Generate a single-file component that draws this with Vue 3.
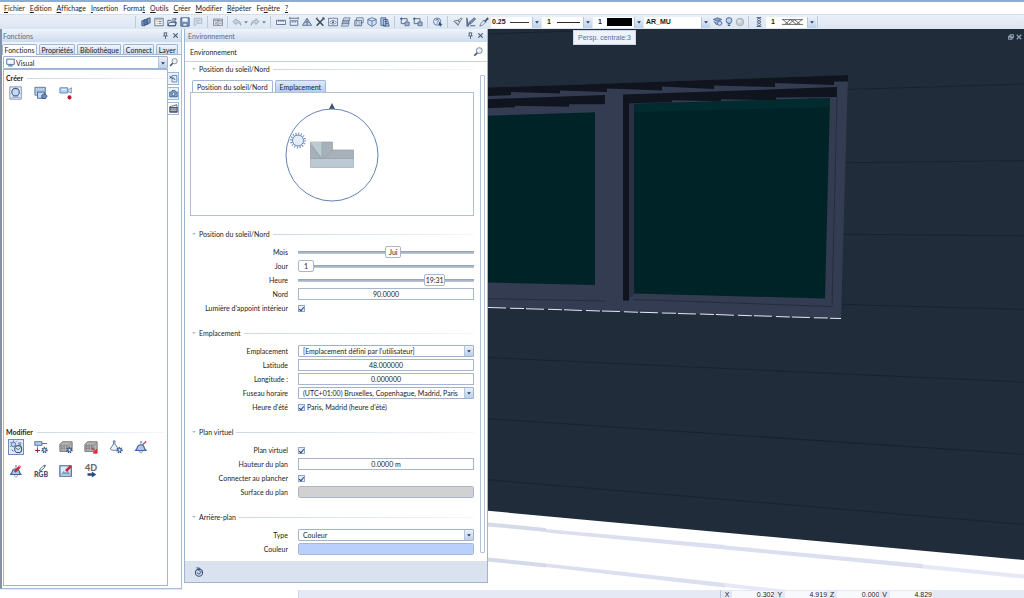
<template>
  <div class="app">
    <svg class="sprite" aria-hidden="true">
      <symbol id="i-layers" viewBox="0 0 12 12"><path d="M1 4.5h4v6H1zM3.5 3h4v6h-4zM7 2l4-1v6l-4 2z" fill="#7f9fc9" stroke="#2f4a78" stroke-width=".9" /></symbol>
      <symbol id="i-list" viewBox="0 0 12 12"><path d="M1 1.5h10v9H1z" fill="#fdfdf6" stroke="#56657d" /><path d="M1.5 2h9v2h-9z" fill="#a9bcd8" /><path d="M3 5.5h1.5M3 8h1.5" stroke="#d1a336" /><path d="M5.5 5.5H9M5.5 8H9" stroke="#56657d" /></symbol>
      <symbol id="i-open" viewBox="0 0 12 12"><path d="M1 10.5V4h3l1 1h5v5.5zM1 10.500l2-4h8.500l-1.500 4z" fill="#e6edf7" stroke="#3b5479" /><path d="M6 3.500c.5-2 3-2.500 4-.5M10.500 1v2.500H8" fill="none" stroke="#3b5479" /></symbol>
      <symbol id="i-save" viewBox="0 0 12 12"><path d="M1 1h10v10H1z" fill="#7f9cc6" stroke="#344e7a" /><path d="M3 1.500h6v4H3z" fill="#f4f7fb" /><path d="M3.500 7.500h5V11h-5z" fill="#dbe5f1" stroke="#344e7a" stroke-width=".7" /></symbol>
      <symbol id="i-sheet" viewBox="0 0 12 12"><path d="M1.500 1.500h9v6h-5l-4 3z" fill="#dfe5ee" stroke="#a3afc0" /><path d="M3 4h6M3 6h4" stroke="#a3afc0" /></symbol>
      <symbol id="i-table" viewBox="0 0 12 12"><path d="M.5 2.500h11v7.500H.5z" fill="#eef1f5" stroke="#6d7c92" /><path d="M1 4.500h10M6 3v7" stroke="#6d7c92" /><path d="M2 6h3v3H2z" fill="#c9ae91" /><path d="M7 6h4M7 8h4" stroke="#9aa9bf" /></symbol>
      <symbol id="i-undo" viewBox="0 0 12 12"><path d="M5 2L1 5.500 5 9V7c3-.5 5 .5 5.500 3C11 6 9 4 5 4z" fill="#c9d3e1" stroke="#8b9ab0" stroke-width=".8" /></symbol>
      <symbol id="i-redo" viewBox="0 0 12 12"><path d="M7 2l4 3.500L7 9V7C4 6.500 2 7.500 1.500 10 1 6 3 4 7 4z" fill="#c9d3e1" stroke="#8b9ab0" stroke-width=".8" /></symbol>
      <symbol id="i-ruler" viewBox="0 0 12 12"><path d="M.5 4h11v5H.5z" fill="#e9f0f9" stroke="#4d6488" /><path d="M3 4v2M5 4v2M7 4v2M9 4v2" stroke="#4d6488" stroke-width=".8" /></symbol>
      <symbol id="i-measure" viewBox="0 0 12 12"><path d="M1 1.500h10M1 0v3M11 0v3" stroke="#4d6488" /><path d="M1.500 4.500h9V10h-9z" fill="#e9f0f9" stroke="#4d6488" /><path d="M4 5v2M6 5v2M8 5v2" stroke="#4d6488" stroke-width=".8" /></symbol>
      <symbol id="i-angle" viewBox="0 0 12 12"><path d="M6 1.500L11.500 10H.5zM3 7c2-1.500 4-1.500 6 0M6 2v8" fill="#c3d3e8" stroke="#3f587f" stroke-width=".9" /></symbol>
      <symbol id="i-tools" viewBox="0 0 12 12"><path d="M1.500 1.500l8.500 9M10.500 1.500L2 10.500" stroke="#3a4a63" stroke-width="1.800" /><path d="M1 2.500l2-2M8.500 1h2.500v2.500" fill="none" stroke="#3a4a63" /></symbol>
      <symbol id="i-view" viewBox="0 0 12 12"><path d="M.5 1.500h11v9H.5z" fill="#e3ebf6" stroke="#5a7093" /><path d="M2 6.500c2-3 6-3 8 0-2 2.500-6 2.500-8 0z" fill="#fff" stroke="#3f587f" stroke-width=".8" /><circle cx="6" cy="6.300" r="1.300" fill="#3f587f" /></symbol>
      <symbol id="i-stack" viewBox="0 0 12 12"><path d="M3.500 1H11L9.500 5H2zM2.500 4H10L8.500 8H1zM2 7h8l-1.500 4H.5z" fill="#d6e1f0" stroke="#4d6488" stroke-width=".8" /></symbol>
      <symbol id="i-windows" viewBox="0 0 12 12"><path d="M3 1h8v6H3z" fill="#edf2f9" stroke="#5a7093" /><path d="M1 4h8v6.500H1z" fill="#cfdcec" stroke="#4d6488" /><path d="M3 6h4v2.500H3z" fill="#fff" stroke="#4d6488" stroke-width=".6" /></symbol>
      <symbol id="i-cube" viewBox="0 0 12 12"><path d="M6 .8l5 2v5.500l-5 3-5-3V2.800z" fill="#d4e2f4" stroke="#3f5f92" stroke-width=".9" /><path d="M1 3l5 2 5-2M6 5v6" fill="none" stroke="#3f5f92" stroke-width=".9" /></symbol>
      <symbol id="i-doc" viewBox="0 0 12 12"><path d="M1 1h6v9H1zM4 3h5l2 8H4z" fill="#b9cbe3" stroke="#34507f" stroke-width=".9" /><path d="M5.500 5.500h3M6 8h3.500" stroke="#34507f" /></symbol>
      <symbol id="i-select" viewBox="0 0 12 12"><path d="M1.500 2h7v6h-7z" fill="#e0e9f5" stroke="#3f587f" /><path d="M6 6h5v4.500H6z" fill="#9eb5d4" stroke="#3f587f" stroke-width=".8" /><path d="M0 2h3M1.500.5v3" stroke="#3f587f" /></symbol>
      <symbol id="i-help" viewBox="0 0 12 12"><circle cx="5" cy="5.500" r="4.300" fill="#e6eef8" stroke="#4d6c9b" /><path d="M3.500 4.300c0-2 3-2 3 0 0 1-1.500 1-1.500 2.200M5 7.600v.8" fill="none" stroke="#34507f" /><path d="M7 5l4.500 4.500-2 .2.800 1.800H9l-.7-1.700L7 11z" fill="#34507f" /></symbol>
      <symbol id="i-brush" viewBox="0 0 12 12"><path d="M1 5l5 5 2-4-3-2zM6 4l4-3 1 1-3 4z" fill="#dfe6ef" stroke="#4b5a71" stroke-width=".9" /><path d="M3 6l3 3" stroke="#4b5a71" /></symbol>
      <symbol id="i-pencil" viewBox="0 0 12 12"><path d="M1 1v10h2zM3 9l1-3 6-5 1.500 1.500L6 8z" fill="#7f97bd" stroke="#34496d" stroke-width=".8" /><path d="M5 10.500h6" stroke="#34496d" /></symbol>
      <symbol id="i-pipette" viewBox="0 0 12 12"><path d="M1 11l1-3 4-4 2 2-4 4z" fill="#e6edf7" stroke="#4b5a71" stroke-width=".8" /><path d="M5.500 3.500l3 3M7 5l3-4 1.300 1.200L8 5.500z" fill="#3f4f69" stroke="#3f4f69" /></symbol>
      <symbol id="i-planes" viewBox="0 0 12 12"><path d="M.5 3l5-2 5 2-5 2zM1 5l3 4 7-2" fill="#8fa9ce" stroke="#3f5f92" /><circle cx="8" cy="7.500" r="2.500" fill="#cbdaee" stroke="#3f5f92" /></symbol>
      <symbol id="i-bulb" viewBox="0 0 12 12"><circle cx="6" cy="4.200" r="3.500" fill="#bcd0ec" stroke="#3f5f92" /><path d="M4.500 8h3M4.500 10h3" stroke="#3f5f92" stroke-width="1.300" /></symbol>
      <symbol id="i-disc" viewBox="0 0 12 12"><circle cx="6" cy="6" r="4.500" fill="#c9cdd3" stroke="#a2a8b1" /><circle cx="5" cy="5" r="1.800" fill="#e5e7ea" /></symbol>
      <symbol id="i-hatch" viewBox="0 0 12 12"><path d="M3.500 0l5 3-5 3 5 3-5 3M8.500 0l-5 3 5 3-5 3 5 3M3 .500h6M3 11.500h6" fill="none" stroke="#3f587f" stroke-width=".9" /></symbol>
      <symbol id="i-search" viewBox="0 0 12 12"><circle cx="7.500" cy="4.300" r="3.500" fill="#eef3f9" stroke="#62728b" /><path d="M5 7l-3.500 3.500" stroke="#46546b" stroke-width="2" /></symbol>
      <symbol id="i-pin" viewBox="0 0 8 8"><path d="M2 1h4M2.500 1v3.500M5 1v3.500M1.500 4.500h5M4 4.500V8" fill="none" stroke="#4b5a70" /></symbol>
      <symbol id="i-close" viewBox="0 0 8 8"><path d="M1.500 1.500l5 5M6.500 1.500l-5 5" stroke="#4b5a70" stroke-width="1.300" /></symbol>
      <symbol id="i-caret" viewBox="0 0 8 8"><path d="M1.500 3h5L4 6z" fill="#26344d" /></symbol>
      <symbol id="i-monitor" viewBox="0 0 12 12"><path d="M1 1.500h10v7H1z" fill="#f7fbff" stroke="#41659a" stroke-width="1.200" /><path d="M3 10.500h6" stroke="#41659a" stroke-width="1.500" /></symbol>
      <symbol id="i-wrench-page" viewBox="0 0 12 12"><path d="M4 2h6.500v8.500H4z" fill="#e8f0fa" stroke="#4d6c9b" /><path d="M1 3l3 3 2-1 2 3M1 6l2-3" fill="none" stroke="#34507f" stroke-width="1.300" /></symbol>
      <symbol id="i-camera" viewBox="0 0 12 12"><path d="M1 4h2l1-2h4l1 2h2v6.500H1z" fill="#8ba7cf" stroke="#34507f" /><circle cx="6" cy="6.800" r="2" fill="#eaf1fa" stroke="#34507f" /></symbol>
      <symbol id="i-clap" viewBox="0 0 12 12"><path d="M1 4h10v7H1z" fill="#656d7a" stroke="#2f3540" /><path d="M1 3.500L10.500 1v2.500" fill="#fff" stroke="#2f3540" /><path d="M3 3l1 1M6 2l1 1.500M2 6.500h8M2 8.500h8" stroke="#d9dde3" /></symbol>
      <symbol id="i-render" viewBox="0 0 16 16"><path d="M1 1h13v14H1z" fill="#f2f5f9" stroke="#75839a" /><circle cx="7.500" cy="7" r="4.300" fill="#c4daf2" stroke="#3f5f8f" stroke-width="1.300" /><path d="M2 13.500c1.500-1.500 3-2 5.500-2s4 .5 6 2z" fill="#8da5c6" /></symbol>
      <symbol id="i-film" viewBox="0 0 16 16"><path d="M1 1.500h12v9H1z" fill="#a9c2e2" stroke="#53739f" /><path d="M2 3.500h10M2 9h10" stroke="#e9f0f9" stroke-dasharray="1.500 1.200" /><path d="M4 7h8v7H4z" fill="#c5d8ee" stroke="#41608c" /><path d="M9 10.500c2-2 5-1 6 1l-2 3-4-.5z" fill="#6f8fbc" stroke="#34507f" /></symbol>
      <symbol id="i-movie" viewBox="0 0 16 16"><path d="M1 2h9v6H1z" fill="#b8d2ef" stroke="#5c82b5" /><path d="M10 5l4-3v6l-4-2z" fill="#e8f1fb" stroke="#5c82b5" /><path d="M3 4h5" stroke="#fff" /><circle cx="12" cy="13" r="2.300" fill="#c41230" /></symbol>
      <symbol id="i-env" viewBox="0 0 16 16"><circle cx="5" cy="5" r="2.600" fill="#bfd5ef" stroke="#41659a" /><path d="M1 2l1 1M1 8l1-1M5 .500V2M9 1L8 2" stroke="#41659a" /><circle cx="10.500" cy="10.500" r="4" fill="#d9e4f1" stroke="#3f5a82" stroke-width="1.300" /><path d="M8 9.500l2.500 1.500L13 9M10 3.500h4M11 5.500h3M3 11l2 2" fill="none" stroke="#3f5a82" /></symbol>
      <symbol id="i-gear" viewBox="0 0 10 10"><circle cx="5" cy="5" r="3.300" fill="none" stroke="#33578d" stroke-width="2.600" stroke-dasharray="1.500 1.090" /><circle cx="5" cy="5" r="2.300" fill="#dbe7f5" stroke="#33578d" stroke-width="1.400" /></symbol>
      <symbol id="i-cam-gear" viewBox="0 0 16 16"><path d="M1 2h8v4H1zM9 4h6" fill="#b8d2ef" stroke="#4d77b0" stroke-width="1.200" /><path d="M4 6.500V9" stroke="#4d77b0" /><path d="M1 12h6M4 9.500v5" stroke="#a52430" stroke-width="1.300" /><use href="#i-gear" x="8" y="7.500" width="8" height="8" /></symbol>
      <symbol id="i-block-gear" viewBox="0 0 16 16"><path d="M1 5l3-3h11v8l-3 3H1z" fill="#b4b4b4" stroke="#6b6b6b" /><path d="M2 6h9.500L14 3.500M2 8h10M2 10h10" fill="none" stroke="#6f6f6f" stroke-dasharray="2 1" /><use href="#i-gear" x="8" y="7.500" width="8" height="8" /></symbol>
      <symbol id="i-block-arrow" viewBox="0 0 16 16"><path d="M1 5l3-3h11v8l-3 3H1z" fill="#b4b4b4" stroke="#6b6b6b" /><path d="M2 6h9.500L14 3.500M2 8h10M2 10h10" fill="none" stroke="#5f5f5f" stroke-dasharray="2 1" /><path d="M9 9l3 3" stroke="#d32b3a" stroke-width="1.600" /><path d="M15 10.500V15h-4.500z" fill="#d32b3a" stroke="#d32b3a" /></symbol>
      <symbol id="i-light-gear" viewBox="0 0 16 16"><path d="M5 1h2l-.3 3.500L10.500 10c-2 2.500-7 2.500-9 0l3.700-5.500z" fill="#edf3fa" stroke="#51698e" /><use href="#i-gear" x="8" y="7.500" width="8" height="8" /></symbol>
      <symbol id="i-lamp" viewBox="0 0 16 16"><path d="M8 1v3M1 12c2 0 2.500-2 3-4 .7-3.500 6.500-3.500 7.500 0 .5 2 1 4 3 4z" fill="#a9c9ee" stroke="#40659c" stroke-width="1.200" /><path d="M6 12.500c.5 3 3.500 3 4 0" fill="#f5d9a0" stroke="#8a94a5" /><path d="M9 6l5-4.500" stroke="#bf5a67" stroke-width="1.800" /></symbol>
      <symbol id="i-lamp-edit" viewBox="0 0 16 16"><path d="M8 1v3M1 12c2 0 2.500-2 3-4 .7-3.500 6.500-3.500 7.500 0 .5 2 1 4 3 4z" fill="#a9c9ee" stroke="#40659c" stroke-width="1.200" /><path d="M6 12.500c.5 3 3.500 3 4 0" fill="#fff" stroke="#8a94a5" /><path d="M6.500 9l6.500-6.500" stroke="#c7283a" stroke-width="3" /><path d="M11 2l3 3" stroke="#f3c7cc" /></symbol>
      <symbol id="i-dropper" viewBox="0 0 16 8"><path d="M6 8l1-2.500L11 2l1.500 1.500L9 7z" fill="#edf2f8" stroke="#5e6b7e" /><path d="M10.500 2l2-1.500 1.500 1.500-1.500 1.500z" fill="#6b7788" /></symbol>
      <symbol id="i-texture" viewBox="0 0 16 16"><path d="M1 2h13v12H1z" fill="#dcebfa" stroke="#3f5f92" stroke-width="1.300" /><path d="M2 12l3-4 3 2 2-3 3 5z" fill="#7f9fc9" /><path d="M8 8l5.500-5.500" stroke="#c7283a" stroke-width="3" /></symbol>
      <symbol id="i-arrow" viewBox="0 0 16 8"><path d="M4 2.500h5V.5l5 3.500-5 3.500v-2H4z" fill="#2b4a86" /></symbol>
      <symbol id="i-refresh" viewBox="0 0 12 12"><circle cx="6" cy="6.800" r="4.300" fill="#cfdded" stroke="#3a5378" stroke-width="1.300" /><path d="M3 1l4 .5-2 3M3.500 7l2.500 1.500L9 6M6 4.500l2 1" fill="none" stroke="#3a5378" stroke-width="1.200" /></symbol>
    </svg>

    <div class="frame-top"></div>

    <nav class="menu">
      <button v-for="m in menus" :key="m.join('')">{{ m[0] }}<u>{{ m[1] }}</u>{{ m[2] }}</button>
    </nav>

    <div class="toolbar">
      <div class="tool-group">
        <button v-for="t in fileTools" :key="t" class="tool" :aria-label="t"><svg><use :href="'#i-' + t" /></svg></button>
      </div>
      <div class="tool-group">
        <button class="tool" aria-label="Tableau"><svg><use href="#i-table" /></svg></button>
      </div>
      <div class="tool-group undo">
        <button class="tool" aria-label="Annuler"><svg><use href="#i-undo" /></svg></button>
        <svg class="mini"><use href="#i-caret" /></svg>
        <button class="tool" aria-label="Rétablir"><svg><use href="#i-redo" /></svg></button>
        <svg class="mini"><use href="#i-caret" /></svg>
      </div>
      <div class="tool-group">
        <button v-for="t in viewTools" :key="t" class="tool" :aria-label="t"><svg><use :href="'#i-' + t" /></svg></button>
      </div>
      <div class="tool-group">
        <button class="tool" aria-label="Sélection"><svg><use href="#i-select" /></svg></button>
        <button class="tool" aria-label="Sélection liée"><svg><use href="#i-select" /></svg></button>
      </div>
      <div class="tool-group">
        <button class="tool" aria-label="Aide"><svg><use href="#i-help" /></svg></button>
      </div>
      <div class="tool-group formats">
        <button v-for="t in drawTools" :key="t" class="tool" :aria-label="t"><svg><use :href="'#i-' + t" /></svg></button>
        <div class="pick">
          <select aria-label="Épaisseur"><option>0.25</option></select>
          <svg class="line" viewBox="0 0 24 8" preserveAspectRatio="none"><path d="M0 4.500h24" stroke="#222" /></svg>
          <span class="arrow"><svg><use href="#i-caret" /></svg></span>
        </div>
        <div class="pick short">
          <select aria-label="Type de trait"><option>1</option></select>
          <svg class="line" viewBox="0 0 24 8" preserveAspectRatio="none"><path d="M0 4.500h24" stroke="#222" /></svg>
          <span class="arrow"><svg><use href="#i-caret" /></svg></span>
        </div>
        <div class="pick short">
          <select aria-label="Couleur du trait"><option>1</option></select>
          <span class="ink"></span>
          <span class="arrow"><svg><use href="#i-caret" /></svg></span>
        </div>
        <div class="pick layer">
          <select aria-label="Calque"><option>AR_MU</option></select>
          <span class="arrow"><svg><use href="#i-caret" /></svg></span>
        </div>
        <button v-for="t in layerTools" :key="t" class="tool" :aria-label="t"><svg><use :href="'#i-' + t" /></svg></button>
      </div>
      <div class="tool-group hatch">
        <button class="tool" aria-label="Hachure"><svg><use href="#i-hatch" /></svg></button>
        <div class="pick short">
          <select aria-label="Motif"><option>1</option></select>
          <svg class="line" viewBox="0 0 24 8"><path d="M1 1.500h22M1 6.500h22M2 1.500l6 5 6-5 6 5M4 6.500l6-5 6 5 6-5" fill="none" stroke="#444" stroke-width=".8" /></svg>
          <span class="arrow"><svg><use href="#i-caret" /></svg></span>
        </div>
      </div>
    </div>

    <main class="workspace">
      <aside class="panel functions">
        <header class="titlebar">
          <span>Fonctions</span>
          <button aria-label="Épingler"><svg><use href="#i-pin" /></svg></button>
          <button aria-label="Fermer"><svg><use href="#i-close" /></svg></button>
        </header>
        <div class="tabs">
          <button v-for="(t, i) in tabs" :key="t" :class="['tab', { active: i === 0 }]">{{ t }}</button>
        </div>
        <div class="functions-body">
          <div class="functions-main">
            <div class="combo">
              <svg class="lead"><use href="#i-monitor" /></svg>
              <select aria-label="Module"><option>Visual</option></select>
              <span class="arrow"><svg><use href="#i-caret" /></svg></span>
            </div>
            <div class="groups">
              <section class="group create">
                <h2>Créer</h2>
                <div class="icons">
                  <button v-for="n in createIcons" :key="n" :aria-label="n"><svg><use :href="'#i-' + n" /></svg></button>
                </div>
              </section>
              <section class="group modify">
                <h2>Modifier</h2>
                <div class="icons">
                  <button v-for="(n, i) in modifyIcons" :key="n" :class="{ selected: i === 0 }" :aria-label="n"><svg><use :href="'#i-' + n" /></svg></button>
                  <button class="labelled"><svg><use href="#i-dropper" /></svg><b>RGB</b></button>
                  <button aria-label="Texture"><svg><use href="#i-texture" /></svg></button>
                  <button class="labelled four"><b>4D</b><svg><use href="#i-arrow" /></svg></button>
                </div>
              </section>
            </div>
          </div>
          <div class="side-tabs">
            <button class="plain" aria-label="Rechercher"><svg><use href="#i-search" /></svg></button>
            <button aria-label="Outils"><svg><use href="#i-wrench-page" /></svg></button>
            <button aria-label="Vues"><svg><use href="#i-camera" /></svg></button>
            <button class="active" aria-label="Animation"><svg><use href="#i-clap" /></svg></button>
          </div>
        </div>
      </aside>

      <div class="middle">
        <section class="panel environment">
          <header class="titlebar">
            <span>Environnement</span>
            <button aria-label="Épingler"><svg><use href="#i-pin" /></svg></button>
            <button aria-label="Fermer"><svg><use href="#i-close" /></svg></button>
          </header>
          <div class="subhead">
            <span>Environnement</span>
            <button aria-label="Rechercher"><svg><use href="#i-search" /></svg></button>
          </div>
          <div class="env-body">
            <form class="form" @submit.prevent>
              <section class="block sun">
                <h3>Position du soleil/Nord</h3>
                <div class="sun-tabs">
                  <button type="button" class="active">Position du soleil/Nord</button>
                  <button type="button">Emplacement</button>
                </div>
                <div class="compass">
                  <svg viewBox="0 0 100 102">
                    <path d="M47 8l3-6 3 6z" fill="#41506a" />
                    <circle cx="50" cy="54" r="46" fill="#fff" stroke="#6484b4" />
                    <circle cx="16" cy="39.500" r="7" fill="none" stroke="#6583b5" stroke-width="2" stroke-dasharray="1 1.750" />
                    <circle cx="16" cy="39.500" r="5.500" fill="#e3ecf9" stroke="#6583b5" />
                    <path d="M28.500 41h22v8h21v17.500h-43z" fill="#a7b1b9" stroke="#8a949c" stroke-width=".6" />
                    <path d="M28.500 57.500h43v9h-43zM28.500 41h11.500v16.500z" fill="#bccad3" />
                    <path d="M28.500 57.500h43M40 41v16.500M28.500 45L40 57.500M50.500 49l-8 8" stroke="#8f9aa3" stroke-width=".6" />
                  </svg>
                </div>
              </section>

              <section class="block">
                <h3>Position du soleil/Nord</h3>
                <div v-for="s in sliders" :key="s.id" class="row">
                  <label :for="s.id">{{ s.label }}</label>
                  <div class="slider" :style="{ '--w': s.width + 'px', '--at': (s.value - s.min) / (s.max - s.min) }">
                    <input :id="s.id" v-model.number="s.value" type="range" :min="s.min" :max="s.max" />
                    <output :for="s.id">{{ s.format(s.value) }}</output>
                  </div>
                </div>
                <div class="row">
                  <label for="north">Nord</label>
                  <input id="north" type="text" class="field" value="90.0000" />
                </div>
                <div class="row">
                  <label for="fill">Lumière d'appoint intérieur</label>
                  <input id="fill" type="checkbox" checked />
                </div>
              </section>

              <section class="block">
                <h3>Emplacement</h3>
                <div class="row">
                  <label for="place">Emplacement</label>
                  <div class="combo">
                    <select id="place"><option>[Emplacement défini par l'utilisateur]</option></select>
                    <span class="arrow"><svg><use href="#i-caret" /></svg></span>
                  </div>
                </div>
                <div class="row">
                  <label for="lat">Latitude</label>
                  <input id="lat" type="text" class="field" value="48.000000" />
                </div>
                <div class="row">
                  <label for="lon">Longitude :</label>
                  <input id="lon" type="text" class="field" value="0.000000" />
                </div>
                <div class="row">
                  <label for="zone">Fuseau horaire</label>
                  <div class="combo">
                    <select id="zone"><option>(UTC+01:00) Bruxelles, Copenhague, Madrid, Paris</option></select>
                    <span class="arrow"><svg><use href="#i-caret" /></svg></span>
                  </div>
                </div>
                <div class="row">
                  <label for="dst">Heure d'été</label>
                  <div class="check">
                    <input id="dst" type="checkbox" checked />
                    <span>Paris, Madrid (heure d'été)</span>
                  </div>
                </div>
              </section>

              <section class="block">
                <h3>Plan virtuel</h3>
                <div class="row">
                  <label for="plane">Plan virtuel</label>
                  <input id="plane" type="checkbox" checked />
                </div>
                <div class="row">
                  <label for="height">Hauteur du plan</label>
                  <input id="height" type="text" class="field" value="0.0000 m" />
                </div>
                <div class="row">
                  <label for="floor">Connecter au plancher</label>
                  <input id="floor" type="checkbox" checked />
                </div>
                <div class="row">
                  <label for="surface">Surface du plan</label>
                  <input id="surface" type="color" value="#d1d1d1" />
                </div>
              </section>

              <section class="block">
                <h3>Arrière-plan</h3>
                <div class="row">
                  <label for="type">Type</label>
                  <div class="combo">
                    <select id="type"><option>Couleur</option></select>
                    <span class="arrow"><svg><use href="#i-caret" /></svg></span>
                  </div>
                </div>
                <div class="row">
                  <label for="color">Couleur</label>
                  <input id="color" type="color" value="#bbcffd" />
                </div>
              </section>
            </form>
            <div class="scroll"><i></i></div>
          </div>
          <footer class="env-foot">
            <button aria-label="Actualiser"><svg><use href="#i-refresh" /></svg></button>
          </footer>
        </section>
      </div>

      <div class="viewport">
        <div class="tip">Persp. centrale:3</div>
        <div class="view-buttons">
          <button aria-label="Restaurer"><svg viewBox="0 0 8 8"><path d="M2.500 1h5v4h-5zM.500 3h5v4h-5z" fill="#25344b" stroke="#b9c6d8" /></svg></button>
          <button aria-label="Fermer la vue"><svg viewBox="0 0 8 8"><path d="M1 1l6 6M7 1L1 7" stroke="#8fa3bd" stroke-width="1.500" /></svg></button>
        </div>
        <svg class="scene" viewBox="488 30 536 560" preserveAspectRatio="none">
          <path d="M488 30h536v560H488z" fill="#fff" />
          <path d="M488 30h536v530L488 511z" fill="#212c3b" />
          <path d="M488 35l85-3M847 90.500l177-5.500M846 163.500l178-2M844 235l180 1.500M842 305l182 5M488 358l536 24.500M488 419l536 35.500M488 480l536 44.500" fill="none" stroke="#172230" />
          <!-- window frame -->
          <path d="M488 88.500L848 76l-7 243-353-11z" fill="#333c51" />
          <path d="M488 88.500L848 76v6.500h-14V86l-59-2v4l-61-1.500V90l-52-2.500v4l-55-2v3.500l-47-1.500v3l-49-1.500v3l-23 1z" fill="#10141f" />
          <path d="M488 100l117-4v9h-36v2.500l-54-1v1.500l-27 1z" fill="#10141f" />
          <path d="M488 116.500l107-3.500v172.500L488 283z" fill="#002328" />
          <path d="M629 104h5v191l-5 4z" fill="#2a3145" />
          <path d="M634 104.500l196-5.500-5 200-191-5z" fill="#002328" />
          <path d="M634 104.500l196-5.500v9l-196 5z" fill="#013033" opacity=".6" />
          <path d="M623 95.500L837 88v10l-61 .500v2.500l-55-1v2l-49-1v2l-43 1v197h-6z" fill="#10141f" />
          <path d="M837 98l-5 209M488 299l117 2.500M633 300l198 7" fill="none" stroke="#252d40" />
          <path d="M488 308l353 11" stroke="#e3e9f1" stroke-dasharray="18 4 14 2" />
          <!-- ground joints -->
          <path d="M488 522.500l58 5.500v4l-58-5.500zM488 557.500l58 6v4l-58-6z" fill="#d5dae9" />
          <path d="M546 529l179 16v4.500L546 532.500zM546 563.500l179 19.500v4.500L546 567zM725 545.500l198 18.500v4.500l-198-19z" fill="#dcdff0" />
          <path d="M725 583l62 7h-34l-28-3zM923 564.500l101 10v4l-101-10z" fill="#e6e8f7" />
        </svg>
      </div>
    </main>

    <footer class="status">
      <div class="message"></div>
      <div class="coords">
        <label v-for="c in coords" :key="c.axis">{{ c.axis }}<input type="text" :value="c.value" /></label>
      </div>
    </footer>
  </div>
</template>

<script setup>
import { ref } from "vue";

const menus = [
  ["", "F", "ichier"], ["", "E", "dition"], ["", "A", "ffichage"], ["", "I", "nsertion"],
  ["Forma", "t", ""], ["", "O", "utils"], ["", "C", "réer"], ["", "M", "odifier"],
  ["", "R", "épéter"], ["Fe", "n", "être"], ["", "?", ""],
];
const tabs = ["Fonctions", "Propriétés", "Bibliothèque", "Connect", "Layer"];

const fileTools = ["layers", "list", "open", "save", "sheet"];
const viewTools = ["ruler", "measure", "angle", "tools", "view", "stack", "windows", "cube", "doc"];
const drawTools = ["brush", "pencil", "pipette"];
const layerTools = ["planes", "bulb", "disc"];
const createIcons = ["render", "film", "movie"];
const modifyIcons = ["env", "cam-gear", "block-gear", "block-arrow", "light-gear", "lamp", "lamp-edit"];

const months = ["Jan", "Fév", "Mar", "Avr", "Mai", "Jun", "Jui", "Aoû", "Sep", "Oct", "Nov", "Déc"];
const sliders = ref([
  { id: "month", label: "Mois", min: 1, max: 12, value: 7, width: 16, format: (v) => months[v - 1] },
  { id: "day", label: "Jour", min: 1, max: 31, value: 1, width: 16, format: (v) => v },
  {
    id: "hour", label: "Heure", min: 0, max: 1439, value: 1171, width: 21,
    format: (v) => Math.floor(v / 60) + ":" + String(v % 60).padStart(2, "0"),
  },
]);

const coords = [
  { axis: "X", value: "0.302" },
  { axis: "Y", value: "4.919" },
  { axis: "Z", value: "0.000" },
  { axis: "V", value: "4.829" },
];
</script>

<style>
body { margin: 0; overflow: hidden; }
</style>

<style scoped>
.app {
  height: 100vh; display: flex; flex-direction: column; overflow: hidden;
  background: #e3eaf5; color: #1c1c1c;
  font: 7px/10px Lato, "Noto Sans", sans-serif;
  font-variant-ligatures: none;
}
.app * { box-sizing: border-box; }
.sprite { position: absolute; width: 0; height: 0; }
button, select, input { font: inherit; font-variant-ligatures: none; color: inherit; margin: 0; padding: 0; border: 0; background: none; }
button { display: flex; align-items: center; justify-content: center; }
select { appearance: none; min-width: 0; }
svg { display: block; flex: none; }

.frame-top { height: 2px; background: #8fabd0; flex: none; }
.menu { display: flex; gap: 5px; height: 12px; padding-left: 4px; background: #fff; flex: none; }

.toolbar {
  display: flex; align-items: center; height: 15px; padding-left: 135px; flex: none;
  background: linear-gradient(#eaf0f8, #dbe5f2); border-top: 1px solid #d3deec;
}
.tool-group { display: flex; align-items: center; height: 12px; padding: 0 3px; border-left: 1px solid #bccadd; }
.tool { width: 13px; height: 12px; }
.tool svg { width: 10px; height: 10px; }
.undo .tool { width: 12px; }
.mini { width: 6px; height: 6px; opacity: .6; }
.formats .tool:nth-last-child(-n+3) { width: 11px; }
.formats .layer { margin-right: 2px; }
.hatch { border-right: 1px solid #bccadd; padding-right: 1px; }
.pick {
  display: flex; align-items: center; width: 50px; height: 11px; margin-left: 1px;
  background: #fff; font: bold 7px/10px "Liberation Sans", Arial, sans-serif;
}
.pick select { width: 18px; padding-left: 1px; }
.pick.short select { width: 14px; padding-left: 5px; }
.pick .line { flex: 1; width: 24px; height: 8px; min-width: 0; margin: 0 3px 0 1px; }
.pick.layer { width: 66px; }
.pick.layer select { flex: 1; padding-left: 2px; }
.ink { flex: 1; height: 8px; background: #000; margin-right: 2px; }
.arrow {
  display: flex; align-items: center; justify-content: center; flex: none;
  width: 9px; align-self: stretch; background: linear-gradient(#eaf1fa, #bcd0ea);
  border-left: 1px solid #b3c6e0; pointer-events: none;
}
.arrow svg { width: 6px; height: 6px; }

.workspace { flex: 1; display: flex; min-height: 0; }
.panel { background: #fff; border: 1px solid #a9bdd8; }
.titlebar {
  display: flex; align-items: center; gap: 3px; height: 13px; padding: 0 3px; flex: none;
  background: linear-gradient(#eef4fb, #cddcee); color: #5a6b84;
}
.titlebar span { flex: 1; }
.titlebar button, .titlebar svg { width: 7px; height: 7px; }
.functions .titlebar { padding: 0 2px 0 1px; }

.functions {
  width: 182px; margin-bottom: 1px; display: flex; flex-direction: column; flex: none;
  border-left: 2px solid #8191a8; border-top: 0; background: #fff;
}
.tabs {
  display: flex; gap: 2px; height: 13px; padding: 2px 3px 0 0; flex: none; background: #eef3fa;
  border-bottom: 1px solid #9fb6d4;
}
.tab {
  flex: 1 1 auto; border: 1px solid #9fb6d4; border-bottom: 0; border-radius: 2px 2px 0 0;
  background: linear-gradient(#f2f7fd, #c6d8ee); white-space: nowrap;
}
.tab.active { background: #fff; margin-bottom: -1px; }
.functions-body { flex: 1; display: flex; min-height: 0; }
.functions-main { flex: 1; display: flex; flex-direction: column; padding: 0 0 2px 1px; }
.combo { display: flex; align-items: center; height: 12px; border: 1px solid #9fb3cf; border-radius: 1px; background: #fff; min-width: 0; }
.combo select { flex: 1; padding-left: 4px; }
.lead { width: 9px; height: 9px; margin-left: 2px; }
.lead + select { padding-left: 1px; }
.functions-main .combo { margin-top: 1px; flex: none; height: 13px; }
.groups { flex: 1; display: flex; flex-direction: column; border: 1px solid #9fb6d4; }
.group { padding: 3px 2px; }
.create { flex: 9 0 0; }
.modify { flex: 4 0 0; }
h2, h3 { margin: 0; display: flex; align-items: center; gap: 4px; font: inherit; font-variant-ligatures: none; }
h2 { font-weight: bold; }
h2::after, h3::after { content: ""; flex: 1; height: 1px; background: linear-gradient(90deg, #ccd7e5, #f4f7fb); }
.icons { display: flex; flex-wrap: wrap; gap: 8px 9px; padding: 2px 0 0 2px; }
.icons button { width: 16px; height: 16px; }
.icons svg { width: 14px; height: 14px; }
.icons .selected { border: 1px solid #6f8db8; background: #dbe8f8; }
.icons .labelled { flex-direction: column; line-height: 7px; color: #34507f; }
.icons .labelled svg { height: 7px; }
.icons .labelled b { font-weight: 900; }
.icons .four b { font-size: 9px; color: #6b6b6b; }
.side-tabs { width: 13px; display: flex; flex-direction: column; gap: 2px; }
.side-tabs button { width: 11px; height: 13px; border: 1px solid #9fb6d4; border-left: 0; background: #e9f1fb; }
.side-tabs svg { width: 9px; height: 9px; }
.side-tabs .plain { border: 0; background: none; height: 15px; }
.side-tabs .active { background: #fff; }

.middle { width: 306px; padding-left: 2px; flex: none; background: #fff; }
.environment { border-color: #9eb5d2; border-width: 0 1px 1px; }
.titlebar + .subhead {
  display: flex; align-items: center; height: 20px; padding: 0 4px 0 5px;
  border-bottom: 1px solid #c9d3e0;
}
.subhead span { flex: 1; }
.subhead button, .subhead svg { width: 10px; height: 10px; }
.env-body { display: flex; height: 499px; }
.form { flex: 1; padding-left: 5px; min-width: 0; }
.block { padding-bottom: 11px; }
.block h3 { height: 14px; margin-bottom: 4px; padding-left: 2px; gap: 3px; }
.block h3::before { content: ""; border: 2px solid transparent; border-top-color: #b3bdca; border-bottom: 0; }
.sun-tabs { display: flex; gap: 2px; padding: 0 2px; }
.sun-tabs button { height: 12px; padding: 0 4px; border: 1px solid #9fb6d4; border-bottom: 0; border-radius: 2px 2px 0 0; background: linear-gradient(#dfeafa, #b5cdf0); }
.sun-tabs .active { background: #fff; }
.compass { display: flex; justify-content: center; height: 124px; padding-top: 8px; border: 1px solid #b4bfcc; }
.compass svg { width: 100px; height: 102px; }
.row { display: grid; grid-template-columns: 98px 1fr; column-gap: 10px; align-items: center; height: 14px; }
.row label { text-align: right; }
.field { height: 12px; border: 1px solid #a8b6c9; text-align: center; min-width: 0; background: #fff; }
input[type="checkbox"] { appearance: none; width: 7px; height: 7px; border: 1px solid #8ea5c6; background: #e3ecf8; display: grid; place-items: center; }
input[type="checkbox"]:checked::after { content: ""; width: 2px; height: 4px; border: solid #23447d; border-width: 0 1px 1px 0; transform: rotate(40deg); }
.check { display: flex; align-items: center; gap: 2px; }
input[type="color"] { appearance: none; width: 100%; height: 12px; border: 1px solid #a9b7cc; border-radius: 2px; overflow: hidden; }
input[type="color"]::-webkit-color-swatch-wrapper { padding: 0; }
input[type="color"]::-webkit-color-swatch { border: 0; }
.slider { position: relative; height: 12px; display: flex; align-items: center; }
.slider input { appearance: none; width: 100%; height: 12px; background: linear-gradient(#8e9db4, #c3cddc) center / 100% 3px no-repeat; }
.slider input::-webkit-slider-thumb { appearance: none; width: var(--w); height: 12px; }
.slider output {
  position: absolute; left: calc((100% - var(--w)) * var(--at)); width: var(--w); height: 12px;
  border: 1px solid #a9b7cc; border-radius: 2px; background: #fff; text-align: center; pointer-events: none;
}
.scroll { width: 13px; padding: 13px 2px 8px 6px; display: flex; }
.scroll i { flex: 1; border: 1px solid #b9c4d3; border-radius: 1px; background: #fff; }
.env-foot { height: 21px; display: flex; align-items: center; padding-left: 9px; background: #d9e2ee; }
.env-foot svg { width: 10px; height: 10px; }

.viewport { flex: 1; position: relative; min-width: 0; }
.scene { width: 100%; height: 100%; }
.tip {
  position: absolute; left: 85px; top: 1px; padding: 1px 4px; background: #edf2fb; border: 1px solid #ccd6e6;
  color: #5b6f96; font: 7px/11px "Liberation Sans", Arial, sans-serif; white-space: nowrap;
}
.view-buttons { position: absolute; right: 2px; top: 5px; display: flex; gap: 2px; }
.view-buttons svg { width: 6px; height: 6px; }

.status { height: 8px; flex: none; display: flex; justify-content: space-between; overflow: hidden; background: #e4e9f5; }
.message { width: 299px; background: #fff; border-right: 1px solid #cfd8e6; }
.coords { display: flex; gap: 3px; margin-right: 92px; padding: 1px 0 0 4px; border-left: 1px solid #b9c4d6; font: 7px/7px "Liberation Sans", Arial, sans-serif; }
.coords label { display: flex; gap: 3px; align-items: center; height: 7px; }
.coords input { width: 42px; height: 7px; background: #f7f9fd; text-align: right; }
</style>
